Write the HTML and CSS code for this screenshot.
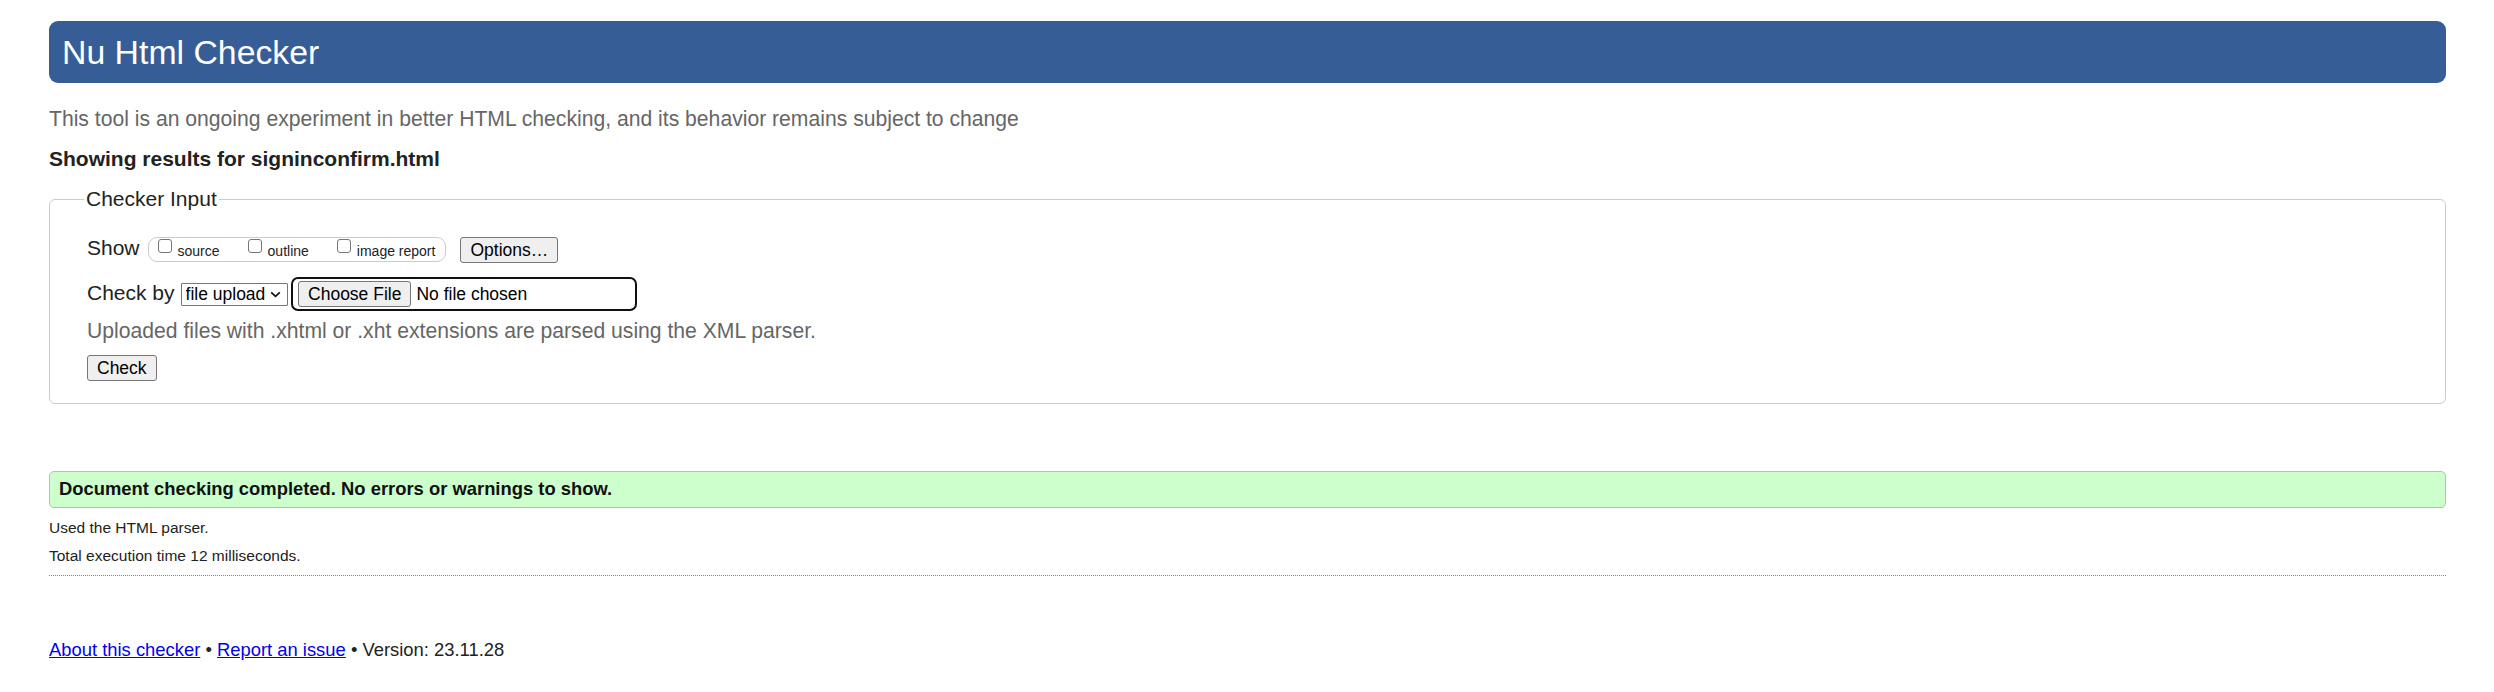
FILE: index.html
```html
<!DOCTYPE html>
<html lang="en">
<head>
<meta charset="utf-8">
<title>Showing results for signinconfirm.html - Nu Html Checker</title>
<link rel="stylesheet" href="styles.css">
</head>
<body>
<h1 class="title">Nu Html Checker</h1>
<p class="about">This tool is an ongoing experiment in better HTML checking, and its behavior remains subject to change</p>
<p class="showing">Showing results for signinconfirm.html</p>
<form class="checker">
  <fieldset class="inputs">
    <legend class="legend">Checker Input</legend>
    <div class="row row-show">
      <span class="label">Show</span>
      <div class="opts">
        <label class="opt"><input type="checkbox"><span>source</span></label>
        <label class="opt"><input type="checkbox"><span>outline</span></label>
        <label class="opt"><input type="checkbox"><span>image report</span></label>
      </div>
      <button type="button" class="btn btn-options">Options…</button>
    </div>
    <div class="row row-check">
      <span class="label label-check">Check by</span>
      <div class="select">
        <select><option>file upload</option></select>
        <svg class="chev" width="11" height="7" viewBox="0 0 11 7"><path d="M1.2 1.3 L5.5 5.4 L9.8 1.3" fill="none" stroke="#111" stroke-width="1.7"/></svg>
      </div>
      <div class="file">
        <span class="btn btn-file">Choose File</span>
        <span class="file-name">No file chosen</span>
      </div>
    </div>
    <p class="hint">Uploaded files with .xhtml or .xht extensions are parsed using the XML parser.</p>
    <div class="submit"><button type="button" class="btn">Check</button></div>
  </fieldset>
</form>
<p class="success">Document checking completed. No errors or warnings to show.</p>
<div class="details">
  <p>Used the HTML parser.</p>
  <p class="time">Total execution time 12 milliseconds.</p>
</div>
<hr class="sep">
<p class="footer"><a href="#">About this checker</a> • <a href="#">Report an issue</a> • Version: 23.11.28</p>
</body>
</html>
```
FILE: styles.css
```css
html { background: #fff; }
body {
  margin: 0;
  padding: 21px 48px 20px 49px;
  font-family: "Liberation Sans", Arial, sans-serif;
  font-size: 21px;
  line-height: 24px;
  color: #222;
}
.title {
  margin: 0;
  background: #365d95;
  color: #fff;
  font-size: 33.8px;
  line-height: 38px;
  font-weight: normal;
  padding: 12px 13px;
  border-radius: 9px;
}
.about {
  margin: 24px 0 0;
  color: #666;
  font-size: 21.15px;
}
.showing {
  margin: 16px 0 0;
  font-weight: bold;
}
.checker { margin: 0; }
.inputs {
  margin: 16px 0 0;
  border: 1px solid #ccc;
  border-radius: 6px;
  padding: 25px 22px 22.3px 37px;
  min-width: 0;
}
.legend {
  padding: 0 2px;
  margin-left: -3px;
}
.row { display: flex; }
.row-show { align-items: flex-start; }
.opts {
  display: flex;
  align-items: flex-start;
  height: 25px;
  box-sizing: border-box;
  margin: 1.3px 0 0 8px;
  border: 1px solid #ccc;
  border-radius: 9px;
  padding: 0 10px 0 9px;
}
.opt {
  display: flex;
  align-items: flex-start;
  margin-right: 28px;
}
.opt:last-child { margin-right: 0; }
.opt input {
  appearance: none;
  -webkit-appearance: none;
  width: 14px;
  height: 14px;
  margin: 1px 6px 0 0;
  border: 1px solid #767676;
  border-radius: 3px;
  background: #fff;
}
.opt span {
  font-size: 14px;
  line-height: 16px;
  margin-top: 4.4px;
}
.btn {
  display: inline-block;
  font-family: "Liberation Sans", Arial, sans-serif;
  font-size: 17.5px;
  line-height: 20px;
  padding: 2px 9px;
  height: 26px;
  box-sizing: border-box;
  border: 1px solid #767676;
  border-radius: 3px;
  background: #efefef;
  color: #000;
  margin: 0;
}
.btn-options { margin: 1.3px 0 0 14px; }
.row-check {
  margin-top: 14px;
  align-items: center;
  height: 34px;
}
.label-check { padding-bottom: 2px; }
.select {
  display: flex;
  align-items: center;
  margin-left: 6px;
  height: 23.4px;
  box-sizing: border-box;
  border: 1px solid #767676;
  border-radius: 1px;
  background: #fff;
}
.select select {
  appearance: none;
  -webkit-appearance: none;
  border: 0;
  background: transparent;
  font-family: "Liberation Sans", Arial, sans-serif;
  font-size: 17.5px;
  color: #000;
  padding: 0 0 0 4px;
  width: 88px;
  height: 21px;
  margin: 0;
  outline: none;
}
.chev { display: block; margin-right: 6.5px; }
.file {
  display: flex;
  align-items: center;
  margin-left: 3.4px;
  width: 346px;
  height: 34px;
  box-sizing: border-box;
  border: 2px solid #101010;
  border-radius: 7px;
  padding: 0 4.6px;
}
.file-name {
  font-size: 17.5px;
  color: #000;
  margin-left: 5px;
}
.hint {
  margin: 7.4px 0 0;
  color: #666;
  font-size: 21.15px;
}
.submit { margin-top: 12px; height: 26px; }
.success {
  margin: 67.5px 0 0;
  border: 1px solid #bbb;
  border-radius: 5px;
  background: #cfc;
  padding: 6px 9px 8px;
  font-weight: bold;
  font-size: 18.4px;
  line-height: 21px;
  color: #111;
}
.details p {
  font-size: 15.5px;
  line-height: 18px;
  margin: 10.5px 0 0;
}
.details .time { margin-top: 9.7px; }
.sep {
  margin: 10px 0 0;
  border: 0;
  border-top: 1px dotted #888;
  height: 0;
}
.footer {
  margin: 63px 0 0;
  font-size: 18.4px;
  line-height: 21px;
}
.footer a { color: #0000ee; }
```
